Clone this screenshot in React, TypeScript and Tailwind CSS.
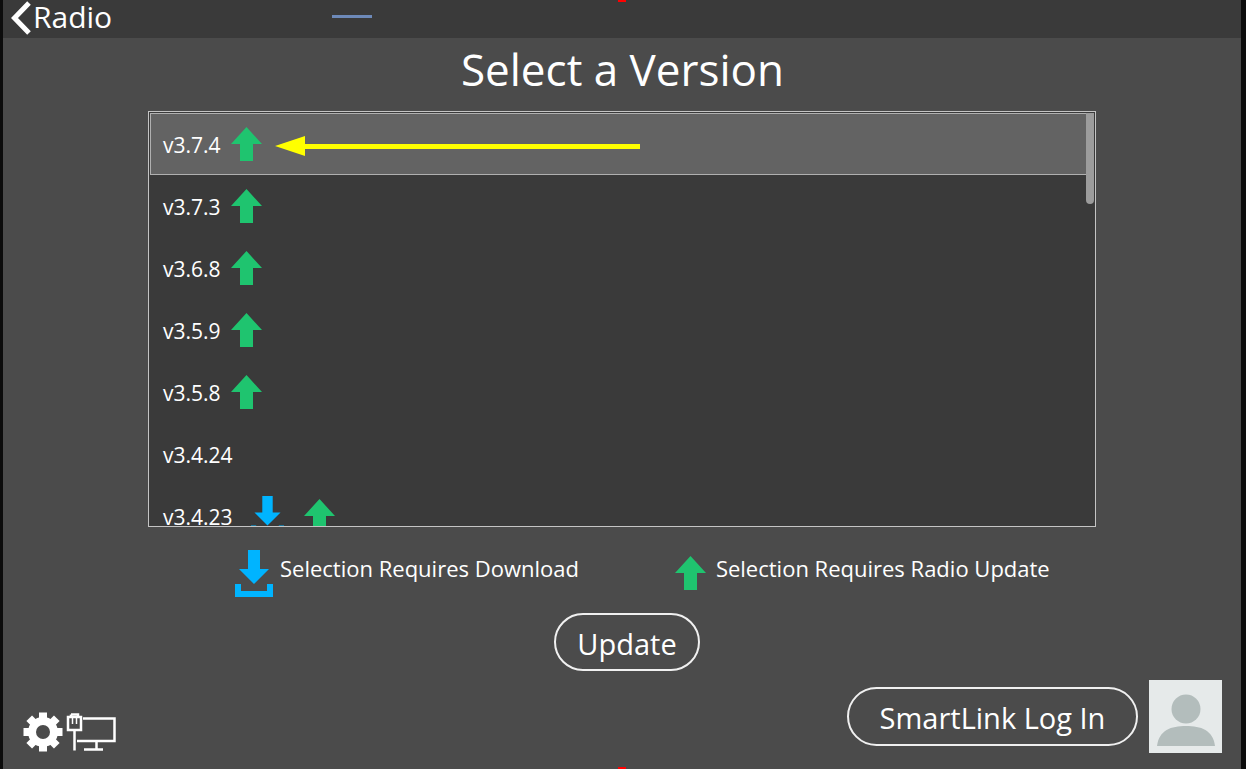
const font = "font-['Open_Sans','Noto_Sans',sans-serif]";

function UpArrow({ className = "" }: { className?: string }) {
  return (
    <svg viewBox="0 0 31 34" className={`h-[34px] w-[31px] shrink-0 ${className}`}>
      <path d="M15.5 0 L31 17 L22 17 L22 34 L9 34 L9 17 L0 17 Z" fill="#1fc46f" />
    </svg>
  );
}

function DownloadIcon({ small = false }: { small?: boolean }) {
  return (
    <svg viewBox="0 0 38 47" className={small ? "h-[41px] w-[33px] shrink-0" : "h-[47px] w-[38px] shrink-0"}>
      <path d="M13 0 H25 V19 H34 L19 34 L4 19 H13 Z" fill="#00b4ff" />
      <path d="M0 34 H6 V41 H32 V34 H38 V47 H0 Z" fill="#00b4ff" />
    </svg>
  );
}

const versions = [
  { name: "v3.7.4", up: true, selected: true },
  { name: "v3.7.3", up: true },
  { name: "v3.6.8", up: true },
  { name: "v3.5.9", up: true },
  { name: "v3.5.8", up: true },
  { name: "v3.4.24" },
  { name: "v3.4.23", up: true, download: true },
];

const gearTeeth = [0, 45, 90, 135];

export default function App() {
  return (
    <div className={`relative flex h-[769px] w-[1246px] overflow-hidden bg-[#4b4b4b] text-white ${font}`}>
      <div className="w-[3px] shrink-0 bg-[#0c0c0c]" />
      <div className="flex min-w-0 flex-1 flex-col">
        {/* Title bar */}
        <div className="flex h-[38px] shrink-0 items-start bg-[#3a3a3a]">
          <svg viewBox="0 0 22 34" className="ml-[7px] mt-px h-[34px] w-[22px]">
            <path d="M19 2 L4.5 17 L19 32" fill="none" stroke="#ffffff" strokeWidth="5" />
          </svg>
          <span className="ml-[1px] text-[30px] leading-[34px]">Radio</span>
          <span className="ml-[220px] mt-[15px] h-[3px] w-[40px] bg-[#6d89b8]" />
        </div>

        <h1 className="mt-[4px] ml-[1px] text-center text-[44px] leading-[54px]">Select a Version</h1>

        {/* Version list */}
        <div className="ml-[145px] mt-[15px] h-[416px] w-[948px] shrink-0 overflow-hidden border border-[#c4c4c4] bg-[#3a3a3a] pl-px pt-px">
          <div className="relative h-full">
            {versions.map((v) => (
              <div
                key={v.name}
                className={`flex h-[62px] w-[938px] items-center text-[21px] ${v.selected ? "border border-[#b0b0b0] bg-[#636363] pl-[12px]" : "pl-[13px]"}`}
              >
                <span className="pt-[4px]">{v.name}</span>
                {v.download && (
                  <span className="ml-[18px]">
                    <DownloadIcon small />
                  </span>
                )}
                {v.up && <UpArrow className={v.download ? "ml-[20px]" : "ml-[10px]"} />}
              </div>
            ))}
            <div className="absolute right-[1px] top-0 h-[91px] w-[8px] rounded-b-full bg-[#9c9c9c]" />
          </div>
        </div>

        {/* Legend */}
        <div className="ml-[232px] mt-[23px] flex h-[47px] items-start">
          <DownloadIcon />
          <span className="ml-[7px] text-[22px] leading-[36px]">Selection Requires Download</span>
          <span className="ml-[96px] mt-[6px]">
            <UpArrow />
          </span>
          <span className="ml-[10px] text-[22px] leading-[36px]">Selection Requires Radio Update</span>
        </div>

        <div className="mt-[16px] ml-[551px]">
          <button className="h-[58px] w-[146px] rounded-full border-2 border-[#f0f0f0] pt-[3px] text-[29px]">Update</button>
        </div>

        {/* Footer */}
        <div className="mt-[9px] flex items-start">
          <div className="ml-[20px] mt-[28px] flex items-start gap-[1px]">
            <svg viewBox="0 0 40 40" className="mt-[4px] h-[40px] w-[40px]">
              {gearTeeth.map((deg) => (
                <rect key={deg} x="16" y="0.5" width="8" height="39" fill="#ffffff" transform={`rotate(${deg} 20 20)`} />
              ))}
              <circle cx="20" cy="20" r="15" fill="#ffffff" />
              <circle cx="20" cy="20" r="7" fill="#4b4b4b" />
            </svg>
            <svg viewBox="0 0 56 48" className="h-[48px] w-[56px]" fill="none" stroke="#ffffff" strokeWidth="2.5">
              <path d="M4 9 H17 V22 H4 Z" />
              <path d="M7 6.5 H14 V9" />
              <path d="M7 6.5 V9" />
              <path d="M8.5 9 V16" strokeWidth="1.5" />
              <path d="M12.5 9 V16" strokeWidth="1.5" />
              <path d="M10.5 22 V42.5" />
              <path d="M19 10.5 H50.5 V33 H13" />
              <path d="M32.5 33 V41.5" />
              <path d="M20 41.5 H39" />
            </svg>
          </div>
          <div className="ml-auto mr-[19px] flex items-start">
            <button className="mt-[7px] h-[59px] w-[291px] rounded-full border-2 border-[#f0f0f0] pt-[2px] text-[29px]">SmartLink Log In</button>
            <div className="ml-[11px] flex h-[73px] w-[73px] items-end justify-center bg-[#e6eaea]">
              <svg viewBox="0 0 73 73" className="h-[73px] w-[73px]">
                <circle cx="37" cy="29" r="14.5" fill="#b3bdbc" />
                <path d="M8 66 C10 50 22 46 37 46 C52 46 64 50 66 66 Z" fill="#b3bdbc" />
              </svg>
            </div>
          </div>
        </div>
      </div>
      <div className="w-[5px] shrink-0 bg-[#0c0c0c]" />

      {/* annotation + edge markers */}
      <svg viewBox="0 0 370 24" className="absolute left-[275px] top-[134px] h-[24px] w-[370px]">
        <path d="M0 12 L30 2 L30 10 L365 10 L365 15 L30 15 L30 22 Z" fill="#ffff00" />
      </svg>
      <div className="absolute left-[618px] top-0 h-[2px] w-[8px] bg-[#ff0000]" />
      <div className="absolute bottom-0 left-[618px] h-[2px] w-[8px] bg-[#ff0000]" />
    </div>
  );
}
